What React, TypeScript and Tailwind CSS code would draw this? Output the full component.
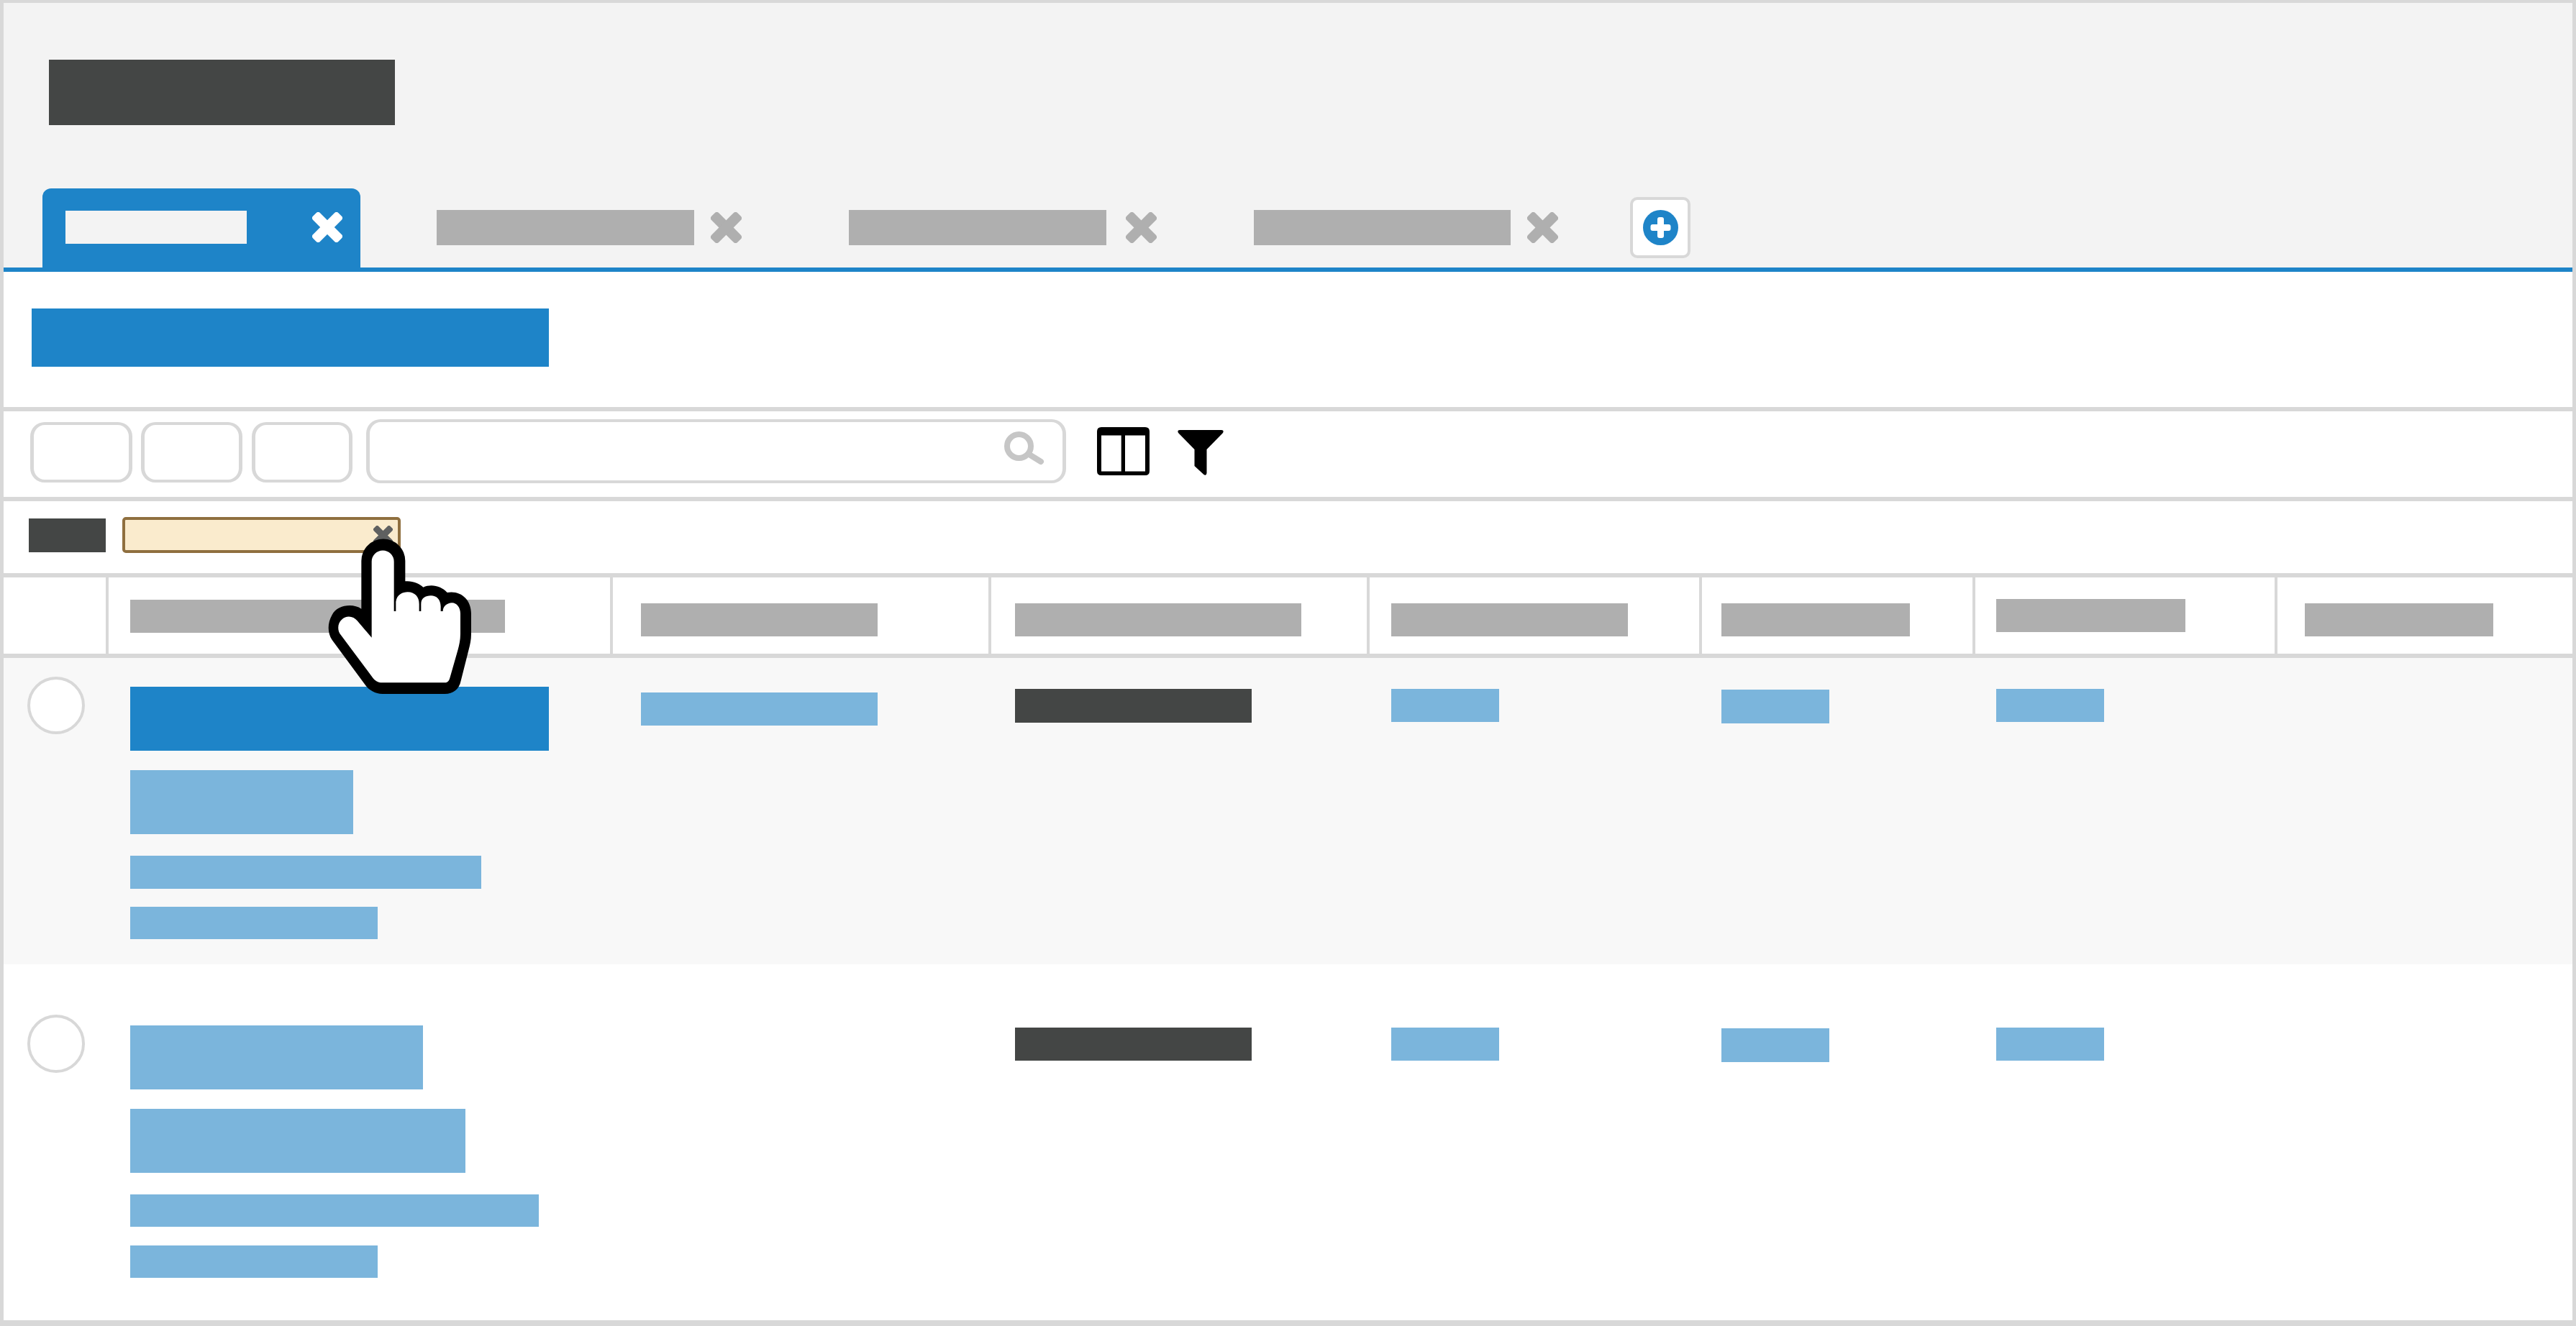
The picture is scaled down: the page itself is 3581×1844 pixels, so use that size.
function CloseIcon({ className, fill }: { className: string; fill: string }) {
  return (
    <svg viewBox="0 0 42 42" className={className}>
      <rect x="-4" y="14" width="50" height="14" rx="4" fill={fill} transform="rotate(45 21 21)" />
      <rect x="-4" y="14" width="50" height="14" rx="4" fill={fill} transform="rotate(-45 21 21)" />
    </svg>
  );
}

function PlusIcon() {
  return (
    <svg viewBox="0 0 49 49" className="h-[49px] w-[49px]">
      <circle cx="24.5" cy="24.5" r="24.5" fill="#1e84c8" />
      <rect x="10.5" y="20" width="28" height="9" rx="3" fill="#fff" />
      <rect x="20" y="10" width="9" height="29" rx="3" fill="#fff" />
    </svg>
  );
}

function SearchIcon() {
  return (
    <svg viewBox="0 0 56 47" className="mt-[13px] mr-[25px] ml-auto h-[47px] w-[56px]" fill="none" stroke="#c6c6c6" strokeWidth="8">
      <circle cx="20.5" cy="20.5" r="16.5" />
      <path d="M34 31.5 L51 42" strokeLinecap="round" />
    </svg>
  );
}

function ColumnsIcon() {
  return (
    <svg viewBox="0 0 73 67" className="mt-[22px] ml-[43px] h-[67px] w-[73px]">
      <path
        fillRule="evenodd"
        d="M6 0 H67 Q73 0 73 6 V61 Q73 67 67 67 H6 Q0 67 0 61 V6 Q0 0 6 0 Z M6 11.5 V61.5 H33.7 V11.5 Z M39 11.5 V61.5 H67 V11.5 Z"
        fill="#000"
      />
    </svg>
  );
}

function FunnelIcon() {
  return (
    <svg viewBox="0 0 64 64" className="mt-[26px] ml-[39px] h-[64px] w-[64px]">
      <path d="M3 0 H61 Q65 0 63 4 L40.5 27 V60 Q40 64 36.5 62 L23.5 50 V27 L1 4 Q-1 0 3 0 Z" fill="#000" />
    </svg>
  );
}

function HandCursor() {
  return (
    <svg viewBox="0 0 900 840" className="absolute top-[696px] left-[395px] h-[280px] w-[300px]">
      <path
        d="M307 240 A91.5 91.5 0 0 1 490 240 L490 325 C520 322 550 335 565 350 C600 335 640 345 665 372 C720 362 765 400 765 460 L765 545 C765 570 760 590 755 610 L722 740 C715 775 690 795 655 795 L395 795 C365 795 340 780 325 760 L185 570 C165 540 165 500 185 465 C205 425 270 415 307 440 Z"
        fill="#000"
      />
      <path
        d="M350 560 L350 243 A46.5 46.5 0 0 1 443 243 L443 450 L451 450 L451 410 C455 380 480 370 500 370 C530 370 548 390 548 420 L548 450 L556 450 L556 420 C556 395 575 385 597 385 C620 385 637 400 638 430 L638 450 L647 450 C647 430 665 415 685 415 C705 415 720 435 720 460 L720 545 C720 570 715 590 710 610 L677 725 C672 745 665 748 650 748 L395 748 C375 748 365 740 355 728 L222 550 C205 530 208 500 225 485 C245 465 275 470 290 490 Z"
        fill="#fff"
      />
    </svg>
  );
}

const rowGrid = "grid grid-cols-[146px_701px_526px_526px_462px_380px_420px_410px]";
const headCell = "border-r-4 border-[#d8d8d8]";
const greyBar = "h-[46px] bg-[#afafaf]";
const lightBar = "bg-[#7bb5dc]";
const darkBar = "bg-[#444645]";
const outlined = "rounded-[20px] border-x-[5px] border-y-4 border-[#d8d8d8]";

export default function App() {
  return (
    <div className="relative flex h-[1844px] w-[3581px] flex-col overflow-hidden border-x-[5px] border-t-4 border-b-8 border-[#d8d8d8] bg-white">
      {/* title and tabs */}
      <div className="h-[368px] shrink-0 bg-[#f3f3f3]">
        <div className="h-[79px]" />
        <div className={`ml-[63px] h-[91px] w-[481px] ${darkBar}`} />
        <div className="mt-[88px] flex h-[110px] items-start pl-[54px]">
          <div className="flex h-[116px] w-[442px] shrink-0 rounded-t-[12px] bg-[#1e84c8] pt-[31px] pl-[32px]">
            <div className="h-[46px] w-[252px] bg-[#f3f3f3]" />
            <CloseIcon className="mt-[2px] ml-[91px] h-[42px] w-[42px]" fill="#fff" />
          </div>
          <div className="mt-[30px] ml-[106px] flex h-[49px] items-center gap-[23px]">
            <div className="h-[49px] w-[358px] bg-[#afafaf]" />
            <CloseIcon className="h-[43px] w-[43px]" fill="#afafaf" />
          </div>
          <div className="mt-[30px] ml-[149px] flex h-[49px] items-center gap-[27px]">
            <div className="h-[49px] w-[358px] bg-[#afafaf]" />
            <CloseIcon className="h-[43px] w-[43px]" fill="#afafaf" />
          </div>
          <div className="mt-[30px] ml-[135px] flex h-[49px] items-center gap-[23px]">
            <div className="h-[49px] w-[357px] bg-[#afafaf]" />
            <CloseIcon className="h-[43px] w-[43px]" fill="#afafaf" />
          </div>
          <div className="mt-[12px] ml-[100px] flex h-[85px] w-[84px] items-center justify-center rounded-[10px] border-4 border-[#d8d8d8] bg-white">
            <PlusIcon />
          </div>
        </div>
      </div>
      <div className="h-[6px] shrink-0 bg-[#1e84c8]" />

      {/* action */}
      <div className="h-[194px] shrink-0 border-b-[6px] border-[#d8d8d8] pt-[51px] pl-[39px]">
        <div className="h-[81px] w-[719px] bg-[#1e84c8]" />
      </div>

      {/* toolbar */}
      <div className="flex h-[125px] shrink-0 items-start border-b-[6px] border-[#d8d8d8] pl-[37px]">
        <div className={`mt-[15px] h-[84px] w-[142px] ${outlined}`} />
        <div className={`mt-[15px] ml-[12px] h-[84px] w-[141px] ${outlined}`} />
        <div className={`mt-[15px] ml-[13px] h-[84px] w-[140px] ${outlined}`} />
        <div className={`mt-[11px] ml-[19px] flex h-[89px] w-[973px] ${outlined}`}>
          <SearchIcon />
        </div>
        <ColumnsIcon />
        <FunnelIcon />
      </div>

      {/* applied filters */}
      <div className="flex h-[106px] shrink-0 items-start border-b-[6px] border-[#d8d8d8] pl-[35px]">
        <div className={`mt-[24px] h-[47px] w-[107px] ${darkBar}`} />
        <div className="mt-[22px] ml-[23px] flex h-[50px] w-[387px] items-start justify-end rounded-[5px] border-4 border-[#8f6f3f] bg-[#faebcd] pt-[8px] pr-[7px]">
          <CloseIcon className="h-[27px] w-[27px]" fill="#5f6060" />
        </div>
      </div>

      {/* table head */}
      <div className={`${rowGrid} h-[112px] shrink-0 grid-rows-[106px] border-b-[6px] border-[#d8d8d8]`}>
        <div className={headCell} />
        <div className={`${headCell} pt-[31px] pl-[30px]`}>
          <div className={`${greyBar} w-[521px]`} />
        </div>
        <div className={`${headCell} pt-[36px] pl-[39px]`}>
          <div className={`${greyBar} w-[329px]`} />
        </div>
        <div className={`${headCell} pt-[36px] pl-[33px]`}>
          <div className={`${greyBar} w-[398px]`} />
        </div>
        <div className={`${headCell} pt-[36px] pl-[30px]`}>
          <div className={`${greyBar} w-[329px]`} />
        </div>
        <div className={`${headCell} pt-[36px] pl-[27px]`}>
          <div className={`${greyBar} w-[262px]`} />
        </div>
        <div className={`${headCell} pt-[30px] pl-[29px]`}>
          <div className={`${greyBar} w-[263px]`} />
        </div>
        <div className="pt-[36px] pl-[38px]">
          <div className={`${greyBar} w-[262px]`} />
        </div>
      </div>

      {/* first row */}
      <div className={`${rowGrid} h-[426px] shrink-0 bg-[#f8f8f8]`}>
        <div className="pt-[26px] pl-[33px]">
          <div className="h-[80px] w-[80px] rounded-full border-4 border-[#d8d8d8] bg-white" />
        </div>
        <div className="flex flex-col items-start pt-[40px] pl-[30px]">
          <div className="h-[89px] w-[582px] bg-[#1e84c8]" />
          <div className={`mt-[27px] h-[89px] w-[310px] ${lightBar}`} />
          <div className={`mt-[30px] h-[46px] w-[488px] ${lightBar}`} />
          <div className={`mt-[25px] h-[45px] w-[344px] ${lightBar}`} />
        </div>
        <div className="pt-[48px] pl-[39px]">
          <div className={`h-[46px] w-[329px] ${lightBar}`} />
        </div>
        <div className="pt-[43px] pl-[33px]">
          <div className={`h-[47px] w-[329px] ${darkBar}`} />
        </div>
        <div className="pt-[43px] pl-[30px]">
          <div className={`h-[46px] w-[150px] ${lightBar}`} />
        </div>
        <div className="pt-[44px] pl-[27px]">
          <div className={`h-[47px] w-[150px] ${lightBar}`} />
        </div>
        <div className="pt-[43px] pl-[29px]">
          <div className={`h-[46px] w-[150px] ${lightBar}`} />
        </div>
      </div>

      {/* second row */}
      <div className={`${rowGrid} min-h-0 flex-1`}>
        <div className="pt-[70px] pl-[33px]">
          <div className="h-[81px] w-[80px] rounded-full border-4 border-[#d8d8d8] bg-white" />
        </div>
        <div className="flex flex-col items-start pt-[85px] pl-[30px]">
          <div className={`h-[89px] w-[407px] ${lightBar}`} />
          <div className={`mt-[27px] h-[89px] w-[466px] ${lightBar}`} />
          <div className={`mt-[30px] h-[45px] w-[568px] ${lightBar}`} />
          <div className={`mt-[26px] h-[45px] w-[344px] ${lightBar}`} />
        </div>
        <div />
        <div className="pt-[88px] pl-[33px]">
          <div className={`h-[46px] w-[329px] ${darkBar}`} />
        </div>
        <div className="pt-[88px] pl-[30px]">
          <div className={`h-[46px] w-[150px] ${lightBar}`} />
        </div>
        <div className="pt-[89px] pl-[27px]">
          <div className={`h-[47px] w-[150px] ${lightBar}`} />
        </div>
        <div className="pt-[88px] pl-[29px]">
          <div className={`h-[46px] w-[150px] ${lightBar}`} />
        </div>
      </div>

      <HandCursor />
    </div>
  );
}
